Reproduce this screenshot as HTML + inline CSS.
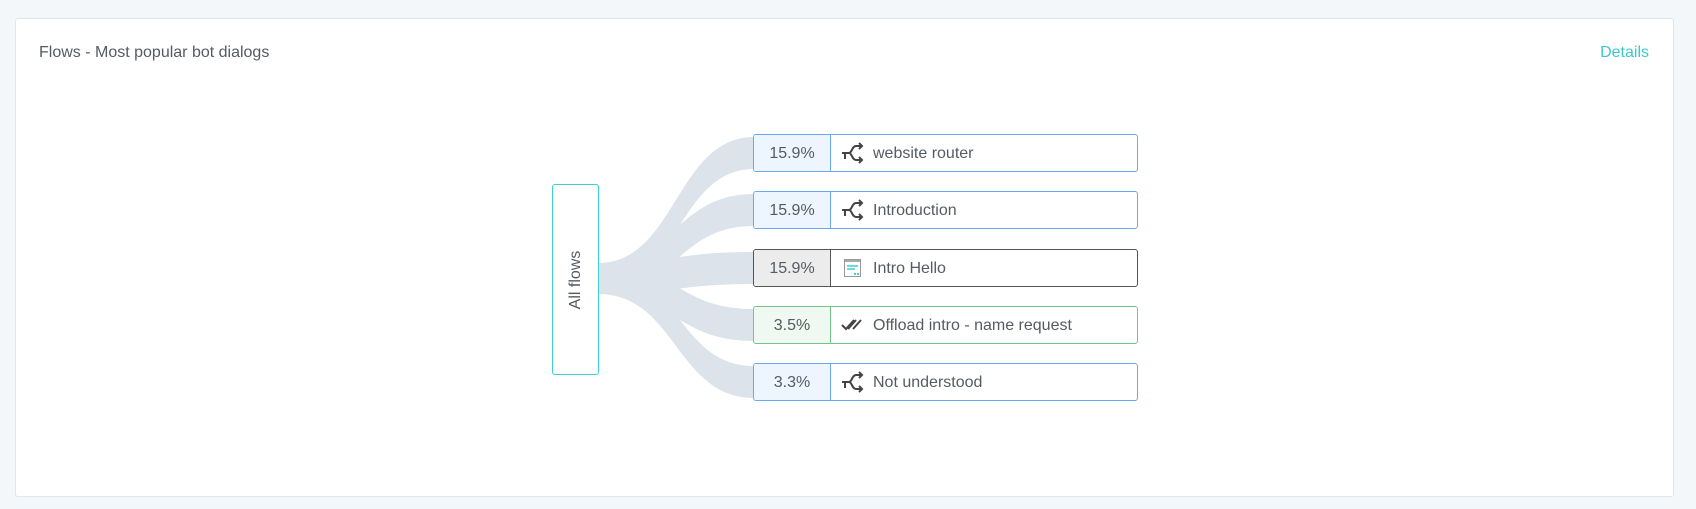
<!DOCTYPE html>
<html><head><style>
body{margin:0;width:1696px;height:509px;background:#f3f7fa;font-family:"Liberation Sans",sans-serif;position:relative;overflow:hidden}
.card{position:absolute;left:15px;top:18px;width:1657px;height:477px;background:#fff;border:1px solid #dfe6ec;border-radius:3px}
.title{position:absolute;left:39px;top:44px;font-size:16px;color:#555b62}
.det{position:absolute;right:47px;top:44px;font-size:16px;color:#3ec7cf}
.src{position:absolute;left:552px;top:184px;width:45px;height:189px;border:1px solid #3ccfd3;border-radius:3px;background:#fff}
.src span{position:absolute;left:50%;top:50%;transform:translate(-50%,-50%) rotate(-90deg);white-space:nowrap;font-size:16px;color:#555b62}
.row{position:absolute;left:753px;width:383px;height:36px;border:1px solid #69a9f4;border-radius:3px;background:#fff;display:flex;font-size:16px;color:#555b62;overflow:hidden}
.row .p{width:76px;border-right:1px solid #69a9f4;background:#edf5fe;text-align:center;line-height:37px}
.row .n{line-height:37px;padding-left:87px;display:flex;align-items:center;position:relative}
.row svg{position:absolute;left:10px;top:7px}
.row .n{padding-left:42px}
.g{border-color:#555}.g .p{background:#ececec;border-color:#555}
.gr{border-color:#72c48c}.gr .p{background:#eff8f1;border-color:#72c48c}
</style></head><body>
<div class="card"></div>
<div class="title">Flows - Most popular bot dialogs</div>
<div class="det">Details</div>
<svg style="position:absolute;left:0;top:0" width="1696" height="509">
<g fill="#dce3ea">
<path d="M598 263 C676 263 676 137 754 137 L754 169 C676 169 676 294 598 294Z"/>
<path d="M598 263 C676 263 676 194 754 194 L754 226 C676 226 676 294 598 294Z"/>
<path d="M598 263 C676 263 676 252 754 252 L754 284 C676 284 676 294 598 294Z"/>
<path d="M598 263 C676 263 676 309 754 309 L754 341 C676 341 676 294 598 294Z"/>
<path d="M598 263 C676 263 676 366 754 366 L754 398 C676 398 676 294 598 294Z"/>
</g></svg>
<div class="src"><span>All flows</span></div>
<div class="row" style="top:134px"><div class="p">15.9%</div><div class="n"><svg width="24" height="22" viewBox="0 0 24 22" fill="none" stroke="#444" stroke-width="2"><path d="M1 11h7M4 11v6M8 11C11 11 11 4 15 4h6M18 1l3 3-3 3M8 11C11 11 11 18 15 18h6M18 15l3 3-3 3"/></svg>website router</div></div>
<div class="row" style="top:191px"><div class="p">15.9%</div><div class="n"><svg width="24" height="22" viewBox="0 0 24 22" fill="none" stroke="#444" stroke-width="2"><path d="M1 11h7M4 11v6M8 11C11 11 11 4 15 4h6M18 1l3 3-3 3M8 11C11 11 11 18 15 18h6M18 15l3 3-3 3"/></svg>Introduction</div></div>
<div class="row g" style="top:249px"><div class="p">15.9%</div><div class="n"><svg width="24" height="22" viewBox="0 0 24 22"><rect x="3.5" y="2.5" width="16" height="17" fill="#fff" stroke="#999"/><rect x="4" y="3" width="15" height="2" fill="#aaa"/><path d="M6 9h11M6 12h8" stroke="#3ccfd3" stroke-width="1.5"/><rect x="13" y="16" width="2" height="2" fill="#3ccfd3"/><rect x="16" y="16" width="2" height="2" fill="#3ccfd3"/></svg>Intro Hello</div></div>
<div class="row gr" style="top:306px"><div class="p">3.5%</div><div class="n"><svg width="24" height="22" viewBox="0 0 24 22" fill="none" stroke="#444" stroke-width="2"><path d="M1 11l4 4 8-9M7 15l8-9M12 15l8-9"/></svg>Offload intro - name request</div></div>
<div class="row" style="top:363px"><div class="p">3.3%</div><div class="n"><svg width="24" height="22" viewBox="0 0 24 22" fill="none" stroke="#444" stroke-width="2"><path d="M1 11h7M4 11v6M8 11C11 11 11 4 15 4h6M18 1l3 3-3 3M8 11C11 11 11 18 15 18h6M18 15l3 3-3 3"/></svg>Not understood</div></div>
</body></html>
